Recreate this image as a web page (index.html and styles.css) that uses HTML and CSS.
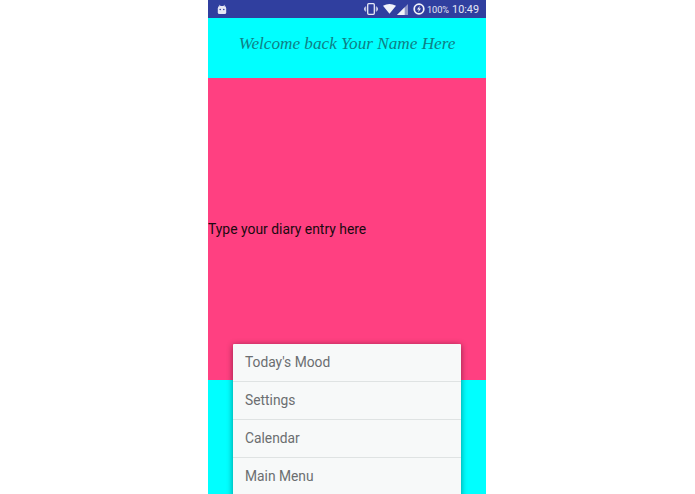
FILE: index.html
```html
<!DOCTYPE html>
<html lang="en">
<head>
<meta charset="utf-8">
<title>Diary</title>
<link rel="stylesheet" href="styles.css">
</head>
<body>
<main class="phone">
  <div class="status">
    <svg class="robot" width="10" height="11" viewBox="0 0 10 10"><path d="M2.4 0.4 L3.4 2 M7.6 0.4 L6.6 2" stroke="#e6e8f5" stroke-width="0.8"/><path d="M0.8 4 Q0.8 1.6 3 1.6 H7 Q9.2 1.6 9.2 4 V8 Q9.2 9.6 7.6 9.6 H2.4 Q0.8 9.6 0.8 8 Z" fill="#e6e8f5"/><circle cx="3.2" cy="5" r="0.8" fill="#303f9f"/><circle cx="6.8" cy="5" r="0.8" fill="#303f9f"/></svg>
    <div class="status-right">
      <svg width="14" height="12" viewBox="0 0 14 12"><rect x="3.7" y="0.7" width="6.6" height="10.6" rx="1" fill="none" stroke="#e6e8f5" stroke-width="1.3"/><path d="M1.7 3.5V8.5M0.4 4.5V7.5M12.3 3.5V8.5M13.6 4.5V7.5" stroke="#e6e8f5" stroke-width="0.9"/></svg>
      <svg class="wifi" width="13" height="10" viewBox="0 0 13 10"><path d="M0 1.8 Q6.5 -1.6 13 1.8 L6.5 9.8 Z" fill="#f2f3fa"/></svg>
      <svg class="signal" width="11" height="11" viewBox="0 0 10 10"><path d="M0 10 L10 0 V10 Z" fill="#8f97c9"/><path d="M0 10 L7 3 V10 Z" fill="#f2f3fa"/></svg>
      <svg class="alarm" width="12" height="12" viewBox="0 0 12 12"><circle cx="6" cy="6" r="4.8" fill="none" stroke="#f2f3fa" stroke-width="1.7"/><path d="M6.8 2.8 L4 6.6 H5.8 L5.2 9.2 L8 5.4 H6.2 Z" fill="#f2f3fa"/></svg>
      <span class="battery">100%</span>
      <span class="clock">10:49</span>
    </div>
  </div>
  <header class="welcome">
    <h1>Welcome back Your Name Here</h1>
  </header>
  <section class="entry">
    <p>Type your diary entry here</p>
  </section>
  <div class="footer"></div>
  <nav class="menu">
    <a>Today's Mood</a>
    <a>Settings</a>
    <a>Calendar</a>
    <a>Main Menu</a>
  </nav>
</main>
</body>
</html>
```

FILE: styles.css
```css
* { box-sizing: border-box; }
html, body { margin: 0; height: 100%; background: #fff; overflow: hidden; }
body { font-family: Roboto, "Liberation Sans", sans-serif; }
.phone {
  position: relative;
  width: 278px;
  height: 494px;
  margin-left: 208px;
  display: flex;
  flex-direction: column;
  overflow: hidden;
}
.status {
  height: 18px;
  flex: none;
  background: #303f9f;
  display: flex;
  align-items: center;
  justify-content: space-between;
  padding: 0 7px 0 9px;
  color: #e6e8f5;
}
.status-right { display: flex; align-items: center; }
.wifi { margin-left: 5px; }
.signal { margin-left: 1px; }
.alarm { margin-left: 5px; }
.battery { font-size: 9.2px; margin-left: 2px; }
.clock { font-size: 10.8px; margin-left: 3px; }
.welcome {
  height: 60px;
  flex: none;
  background: #00ffff;
  display: flex;
  align-items: center;
  justify-content: center;
  padding-bottom: 8px;
}
.welcome h1 {
  margin: 0;
  font-family: "Liberation Serif", serif;
  font-style: italic;
  font-weight: 400;
  font-size: 17.2px;
  color: #0f7f86;
  white-space: nowrap;
}
.entry {
  height: 302px;
  flex: none;
  background: #ff4081;
  display: flex;
  align-items: center;
}
.entry p { margin: 0; font-size: 13.9px; color: #1a0a10; }
.footer { flex: 1; background: #00ffff; }
.menu {
  position: absolute;
  left: 25px;
  top: 344px;
  width: 228px;
  height: 160px;
  background: #f7f9f9;
  border-radius: 1px;
  box-shadow: 0 1px 6px rgba(0, 0, 0, 0.45);
  display: flex;
  flex-direction: column;
}
.menu a {
  height: 38px;
  flex: none;
  display: flex;
  align-items: center;
  padding-left: 12px;
  padding-bottom: 1px;
  font-size: 13.8px;
  color: #6b6e70;
  border-bottom: 1px solid #dfe3e3;
}
```
